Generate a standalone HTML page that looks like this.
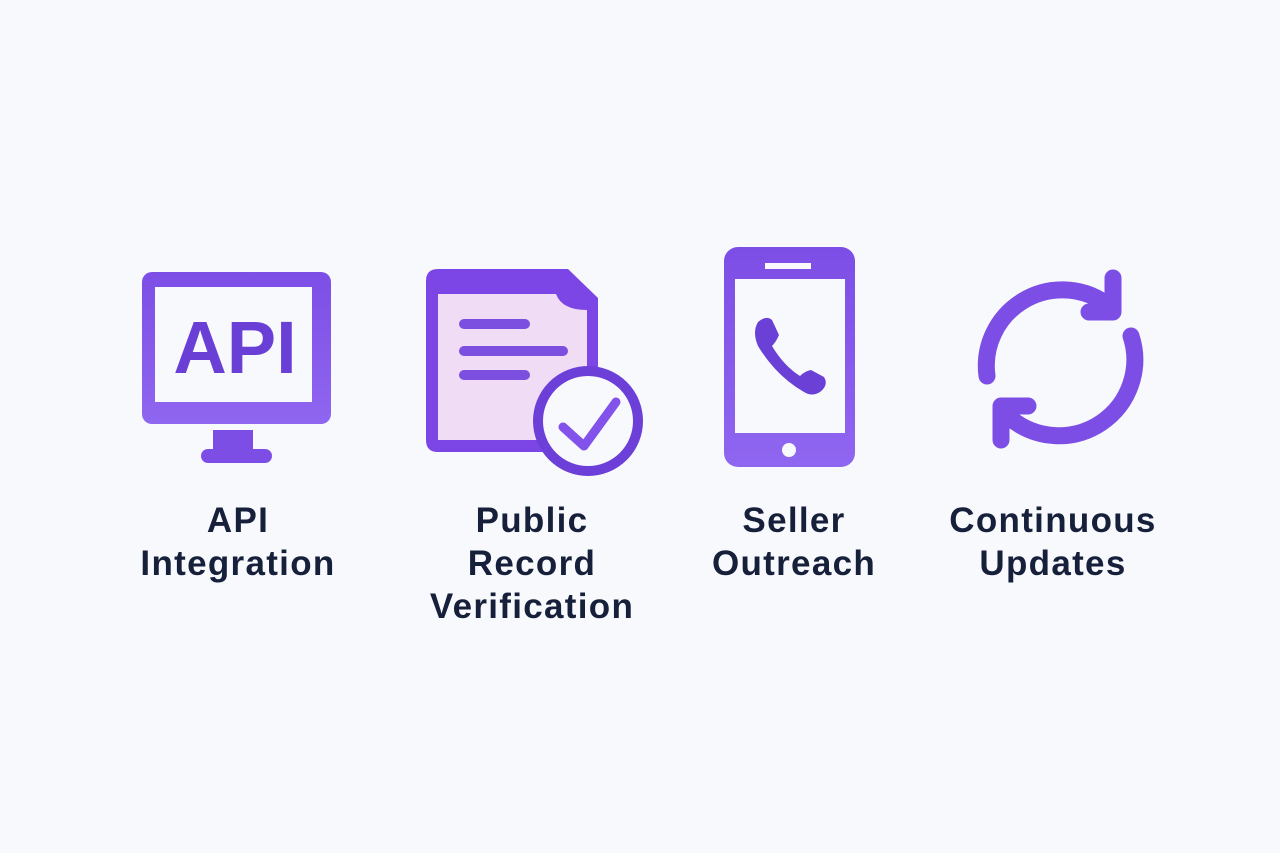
<!DOCTYPE html>
<html><head><style>
body{margin:0;width:1280px;height:853px;background:#f7f9fd;position:relative;overflow:hidden;font-family:"Liberation Sans",sans-serif}
.l{position:absolute;width:300px;text-align:center;font-weight:bold;font-size:35px;letter-spacing:1.3px;line-height:43px;color:#17203a;top:499px}
</style></head><body>
<svg width="1280" height="853" style="position:absolute;left:0;top:0">
<defs><linearGradient id="g" x1="0" y1="0" x2="0" y2="1"><stop offset="0" stop-color="#7d4ee6"/><stop offset="1" stop-color="#8f66f0"/></linearGradient></defs>
<rect x="142" y="272" width="189" height="152" rx="10" fill="url(#g)"/>
<rect x="155" y="287" width="157" height="115" fill="#f7f9fd"/>
<text x="235" y="373" text-anchor="middle" font-family="Liberation Sans" font-weight="bold" font-size="74" fill="#6a3fd6">API</text>
<rect x="213" y="430" width="40" height="22" fill="#7d4ee6"/>
<rect x="201" y="449" width="71" height="14" rx="7" fill="#7d4ee6"/>
<path d="M436 269 H568 L598 298 V440 Q598 452 586 452 H438 Q426 452 426 440 V281 Q426 269 438 269Z" fill="#7c45e6"/>
<path d="M438 294 H556 Q562 310 587 310 V440 H438Z" fill="#f1dcf5"/>
<rect x="459" y="319" width="71" height="10" rx="5" fill="#7c4fe0"/>
<rect x="459" y="346" width="109" height="10" rx="5" fill="#7c4fe0"/>
<rect x="459" y="370" width="71" height="10" rx="5" fill="#7c4fe0"/>
<circle cx="588" cy="421" r="50" fill="#f7f9fd" stroke="#6c3fd8" stroke-width="10"/>
<path d="M563 427 L584 446 L616 402" fill="none" stroke="#8352ea" stroke-width="9" stroke-linecap="round" stroke-linejoin="round"/>
<rect x="724" y="247" width="131" height="220" rx="14" fill="url(#g)"/>
<rect x="735" y="279" width="110" height="154" fill="#f7f9fd"/>
<rect x="765" y="263" width="46" height="6" fill="#f7f9fd"/>
<circle cx="789" cy="450" r="7" fill="#f7f9fd"/>
<path d="M758 322 Q766 315 772 320 L779 335 Q776 342 772 346 Q784 366 800 376 Q805 371 811 370 L824 377 Q829 385 820 392 Q812 397 804 392 Q776 376 758 346 Q752 332 758 322Z" fill="#6a40d6"/>
<g fill="none" stroke="#7c4ee6" stroke-width="17" stroke-linecap="round" stroke-linejoin="round">
<path d="M1105 303 A76 76 0 0 0 987 376"/>
<path d="M1131 336 A76 76 0 0 1 1010 418"/>
<path d="M1113 278 V312 H1089"/>
<path d="M1001 440 V406 H1028"/>
</g>
</svg>
<div class="l" style="left:88px">API<br>Integration</div>
<div class="l" style="left:382px">Public<br>Record<br>Verification</div>
<div class="l" style="left:644px">Seller<br>Outreach</div>
<div class="l" style="left:903px">Continuous<br>Updates</div>
</body></html>
